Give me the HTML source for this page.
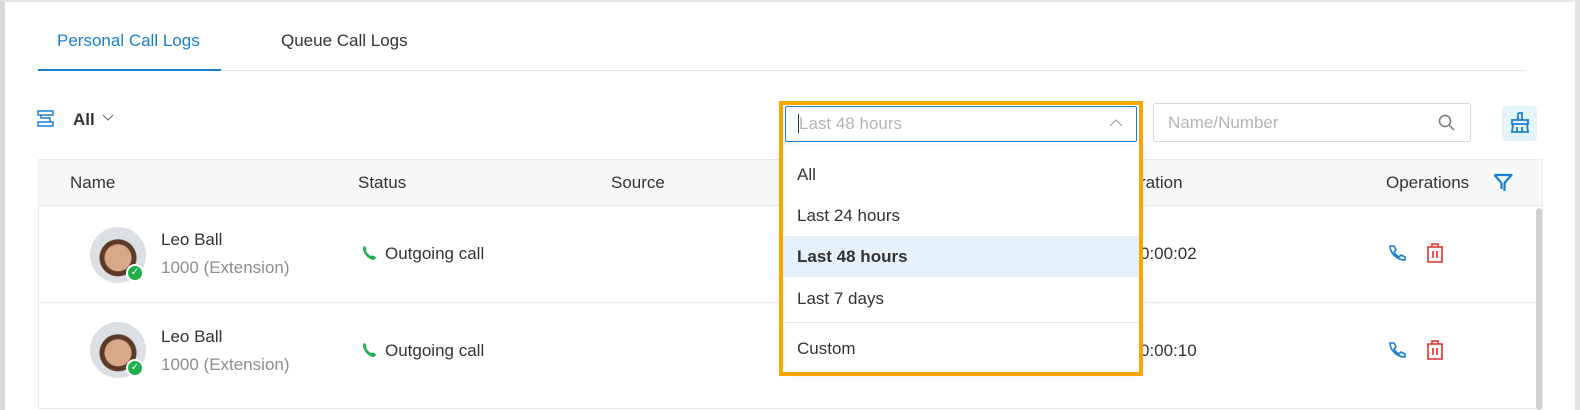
<!DOCTYPE html><html><head><style>
*{margin:0;padding:0;box-sizing:border-box}
body{width:1580px;height:410px;overflow:hidden;background:#fff;font-family:"Liberation Sans",sans-serif;position:relative;color:#333}
.a{position:absolute}
.t{font-size:17px;color:#333}
</style></head><body>
<div class="a" style="left:0;top:0;width:1580px;height:410px;border-left:5px solid #d9d9d9;border-top:2px solid #e6e6e6;border-right:5px solid #e3e3e3"></div>
<div class="a t" style="left:57px;top:31px;color:#1b7fd0">Personal Call Logs</div>
<div class="a t" style="left:281px;top:31px">Queue Call Logs</div>
<div class="a" style="left:38px;top:70px;width:1488px;height:1px;background:#e6e6e6"></div>
<div class="a" style="left:38px;top:69px;width:183px;height:2px;background:#1b7fd0"></div>
<svg class="a" style="left:37px;top:110px" width="18" height="18" viewBox="0 0 18 18" fill="none" stroke="#1b7fd0" stroke-width="1.5"><rect x="1" y="1" width="15" height="4"/><rect x="1" y="12" width="15" height="4"/><path d="M4 5v3h9v4"/></svg>
<div class="a" style="left:73px;top:110px;font-size:17px;font-weight:bold;color:#333">All</div>
<svg class="a" style="left:102px;top:114px" width="12" height="8"><path d="M1 1l5 5 5-5" stroke="#666" fill="none"/></svg>
<div class="a" style="left:1153px;top:103px;width:318px;height:39px;border:1px solid #d9d9d9;border-radius:3px"></div>
<div class="a t" style="left:1168px;top:113px;color:#b5b5b5">Name/Number</div>
<svg class="a" style="left:1438px;top:114px" width="17" height="17" fill="none" stroke="#777" stroke-width="1.5"><circle cx="7" cy="7" r="5.5"/><path d="M11 11l5 5"/></svg>
<div class="a" style="left:1502px;top:106px;width:35px;height:35px;background:#e3f4fb;border-radius:4px"></div>
<svg class="a" style="left:1509px;top:111px" width="22" height="24" fill="none" stroke="#1b7fd0" stroke-width="1.8"><path d="M9 2h4v7M9 2v7M3 9h16v4H3zM4 13l-1 8h16l-1-8M8 16v5M13 16v5"/></svg>
<div class="a" style="left:38px;top:159px;width:1505px;height:250px;border:1px solid #ececec"></div>
<div class="a" style="left:39px;top:160px;width:1503px;height:46px;background:#f7f8fa;border-bottom:1px solid #e8e8e8"></div>
<div class="a t" style="left:70px;top:173px">Name</div>
<div class="a t" style="left:358px;top:173px">Status</div>
<div class="a t" style="left:611px;top:173px">Source</div>
<div class="a t" style="left:1140px;top:173px">ration</div>
<div class="a t" style="left:1386px;top:173px">Operations</div>
<svg class="a" style="left:1493px;top:173px" width="20" height="20" fill="none" stroke="#1b7fd0" stroke-width="2.2" stroke-linejoin="round"><path d="M1.5 2h17l-7 8v8M8.5 10v6M1.5 2l7 8"/></svg>
<div class="a" style="left:39px;top:302px;width:1497px;height:1px;background:#ececec"></div>
<div class="a" style="left:1536px;top:208px;width:6px;height:202px;background:#d0d0d0;border-radius:3px"></div>
<div class="a" style="left:90px;top:227px;width:56px;height:56px;border-radius:50%;background:radial-gradient(circle at 50% 55%,#d9a889 0 13px,#5b3b28 14px 18px,#dcdfe3 19px)"></div>
<div class="a" style="left:126px;top:264px;width:18px;height:18px;border-radius:50%;background:#21b04b;border:2px solid #fff;color:#fff;font-size:10px;text-align:center;line-height:14px">✓</div>
<div class="a t" style="left:161px;top:230px">Leo Ball</div>
<div class="a t" style="left:161px;top:258px;color:#8c8c8c">1000 (Extension)</div>
<div class="a" style="left:90px;top:322px;width:56px;height:56px;border-radius:50%;background:radial-gradient(circle at 50% 55%,#d9a889 0 13px,#5b3b28 14px 18px,#dcdfe3 19px)"></div>
<div class="a" style="left:126px;top:359px;width:18px;height:18px;border-radius:50%;background:#21b04b;border:2px solid #fff;color:#fff;font-size:10px;text-align:center;line-height:14px">✓</div>
<div class="a t" style="left:161px;top:327px">Leo Ball</div>
<div class="a t" style="left:161px;top:355px;color:#8c8c8c">1000 (Extension)</div>
<svg class="a" style="left:362px;top:245px" width="16" height="16"><path d="M2 1c2 0 3 4 2 5 1 2 3 4 5 5 1-1 5 0 5 2l-2 2C7 15 1 9 1 3z" fill="#21b04b"/></svg>
<div class="a t" style="left:385px;top:244px">Outgoing call</div>
<svg class="a" style="left:362px;top:342px" width="16" height="16"><path d="M2 1c2 0 3 4 2 5 1 2 3 4 5 5 1-1 5 0 5 2l-2 2C7 15 1 9 1 3z" fill="#21b04b"/></svg>
<div class="a t" style="left:385px;top:341px">Outgoing call</div>
<div class="a t" style="left:1140px;top:244px">0:00:02</div>
<div class="a t" style="left:1140px;top:341px">0:00:10</div>
<svg class="a" style="left:1388px;top:244px" width="20" height="20" fill="none" stroke="#1b7fd0" stroke-width="1.6"><path d="M2 2h4l2 4-2 2c1 2 3 4 5 5l2-2 4 2v3c-8 0-15-7-15-14z"/></svg>
<svg class="a" style="left:1425px;top:243px" width="20" height="20" fill="none" stroke="#e0302c" stroke-width="1.6"><path d="M2 4h16M7 4V1h6v3M3 4v15h14V4M8 8v7M12 8v7"/></svg>
<svg class="a" style="left:1388px;top:341px" width="20" height="20" fill="none" stroke="#1b7fd0" stroke-width="1.6"><path d="M2 2h4l2 4-2 2c1 2 3 4 5 5l2-2 4 2v3c-8 0-15-7-15-14z"/></svg>
<svg class="a" style="left:1425px;top:340px" width="20" height="20" fill="none" stroke="#e0302c" stroke-width="1.6"><path d="M2 4h16M7 4V1h6v3M3 4v15h14V4M8 8v7M12 8v7"/></svg>
<div class="a" style="left:783px;top:145px;width:356px;height:227px;background:#fff;box-shadow:0 2px 8px rgba(0,0,0,.12)"></div>
<div class="a" style="left:785px;top:106px;width:352px;height:36px;border:1px solid #1b7fd0;border-radius:2px;background:#fff"></div>
<div class="a" style="left:798px;top:114px;width:1px;height:19px;background:#333"></div>
<div class="a t" style="left:799px;top:114px;color:#b5b5b5">Last 48 hours</div>
<svg class="a" style="left:1109px;top:119px" width="14" height="9"><path d="M1 7l6-6 6 6" stroke="#999" fill="none"/></svg>
<div class="a" style="left:783px;top:236px;width:356px;height:41px;background:#e6f2fb"></div>
<div class="a t" style="left:797px;top:165px">All</div>
<div class="a t" style="left:797px;top:206px">Last 24 hours</div>
<div class="a t" style="left:797px;top:247px;font-weight:bold">Last 48 hours</div>
<div class="a t" style="left:797px;top:289px">Last 7 days</div>
<div class="a" style="left:783px;top:322px;width:356px;height:1px;background:#e8e8e8"></div>
<div class="a t" style="left:797px;top:339px">Custom</div>
<div class="a" style="left:779px;top:101px;width:364px;height:275px;border:4px solid #f7a800"></div>
</body></html>
